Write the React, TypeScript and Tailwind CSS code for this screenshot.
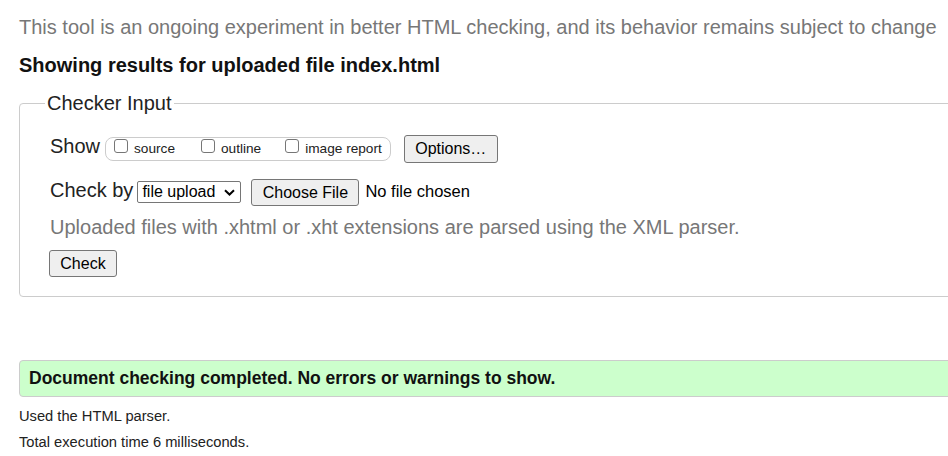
const Box = () => (
    <span className="mt-[1px] w-[14px] h-[14px] shrink-0 border border-[#767676] rounded-[3px] bg-white" />
);

const Btn = ({ label, w, h }: { label: string; w: string; h: string }) => (
    <button
        type="button"
        className={`${w} ${h} flex items-center justify-center shrink-0 bg-[#efefef] border border-[#767676] rounded-[3px] text-[16px] leading-[18px] text-black`}
    >
        {label}
    </button>
);

const options = [
    { label: 'source', gap: '' },
    { label: 'outline', gap: 'ml-[26px]' },
    { label: 'image report', gap: 'ml-[24px]' },
];

export default function App() {
    return (
        <div className="w-[948px] h-[456px] overflow-hidden bg-white pl-[19px] font-['Liberation_Sans',Arial,sans-serif] text-[#222]">
            <p className="pt-[16px] text-[20px] leading-[23px] text-[#777] whitespace-nowrap">
                This tool is an ongoing experiment in better HTML checking, and its behavior remains subject to change
            </p>
            <h2 className="mt-[15px] text-[20px] leading-[23px] font-bold text-[#111] whitespace-nowrap">
                Showing results for uploaded file index.html
            </h2>

            <fieldset className="mt-[15px] w-[960px] border border-[#ccc] rounded-[4px]">
                <legend className="ml-[25px] px-[2px] text-[20px] leading-[23px] text-[#222]">Checker Input</legend>
                <div className="pl-[30px] pt-[20px] pb-[19px]">
                    {/* show */}
                    <div className="flex items-start h-[28px]">
                        <span className="text-[20px] leading-[23px]">Show</span>
                        <div className="ml-[5px] mt-[2px] h-[24px] flex items-start border border-[#ccc] rounded-[8px] pl-[8px] pr-[8px]">
                            {options.map((o) => (
                                <label key={o.label} className={`flex items-start ${o.gap}`}>
                                    <Box />
                                    <span className="ml-[6px] mt-[3px] text-[13.65px] leading-[16px] whitespace-nowrap">{o.label}</span>
                                </label>
                            ))}
                        </div>
                        <div className="ml-[13px]">
                            <Btn label="Options…" w="w-[94px]" h="h-[28px]" />
                        </div>
                    </div>

                    {/* check by */}
                    <div className="mt-[16px] flex items-start h-[27px]">
                        <span className="text-[20px] leading-[23px] whitespace-nowrap">Check by</span>
                        <div className="ml-[4px] mt-[2px] w-[104px] h-[22px] flex items-center justify-between border border-[#767676] rounded-[2px] pl-[4px] pr-[5px] text-[16px] leading-[18px] text-black">
                            <span>file upload</span>
                            <svg width="11" height="7" viewBox="0 0 11 7" fill="none">
                                <path d="M1 1.2 L5.5 5.5 L10 1.2" stroke="#000" strokeWidth="2" />
                            </svg>
                        </div>
                        <div className="ml-[10px]">
                            <Btn label="Choose File" w="w-[108px]" h="h-[27px]" />
                        </div>
                        <span className="ml-[6px] mt-[3px] text-[16.5px] leading-[18px] whitespace-nowrap text-black">No file chosen</span>
                    </div>

                    <p className="mt-[10px] text-[20px] leading-[23px] text-[#777] whitespace-nowrap">
                        Uploaded files with .xhtml or .xht extensions are parsed using the XML parser.
                    </p>

                    <div className="mt-[11px] -ml-[1px]">
                        <Btn label="Check" w="w-[68px]" h="h-[27px]" />
                    </div>
                </div>
            </fieldset>

            <div className="mt-[63px] w-[960px] h-[37px] bg-[#ccffcc] border border-[#ccc] rounded-[4px] pl-[9px] pt-[7px] text-[17.5px] leading-[20px] font-bold text-[#111] whitespace-nowrap">
                Document checking completed. No errors or warnings to show.
            </div>

            <p className="mt-[11px] text-[14.7px] leading-[16px]">Used the HTML parser.</p>
            <p className="mt-[10px] text-[14.7px] leading-[16px]">Total execution time 6 milliseconds.</p>
        </div>
    );
}
